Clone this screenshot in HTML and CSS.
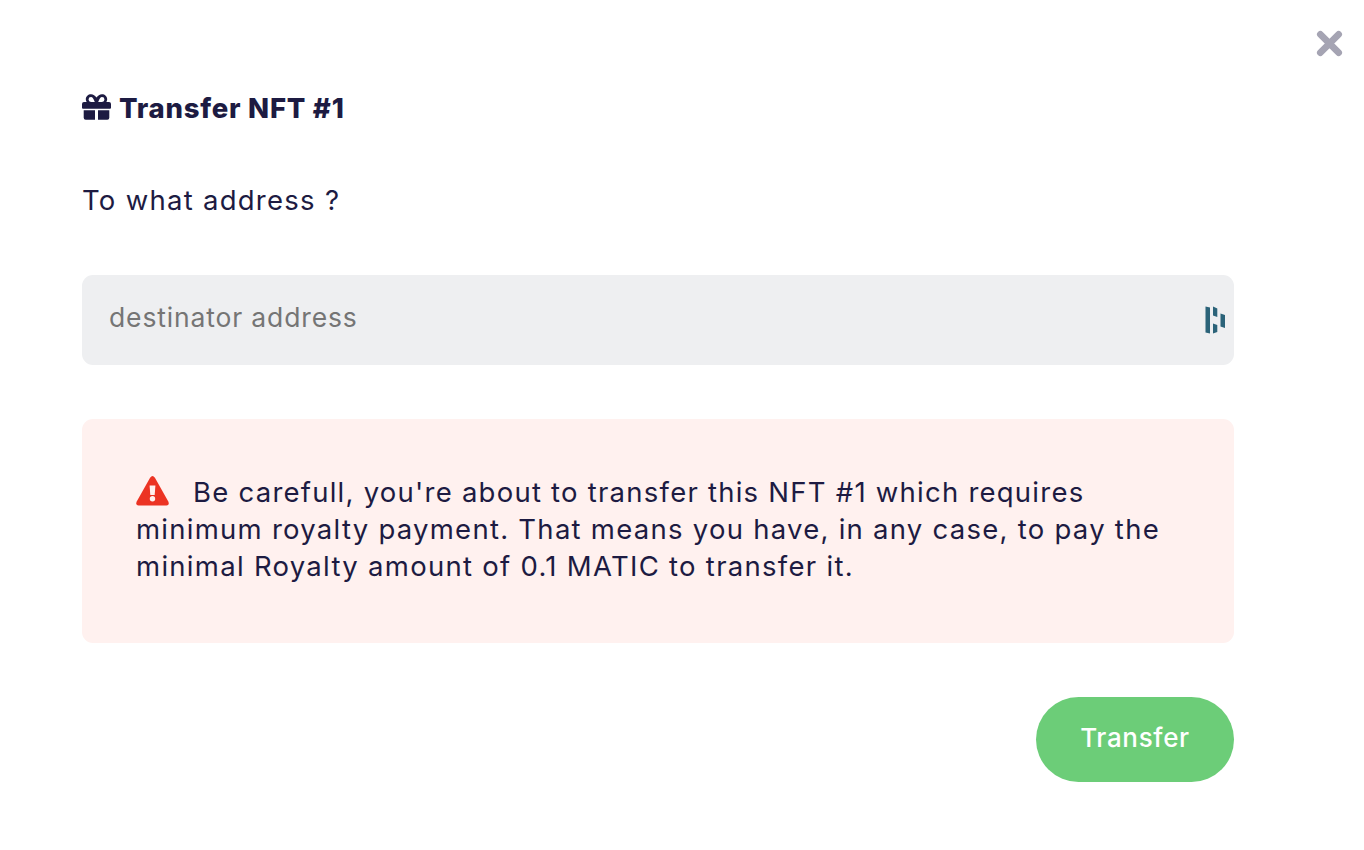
FILE: index.html
```html
<!DOCTYPE html>
<html lang="en">
<head>
<meta charset="utf-8">
<title>Transfer NFT</title>
<link rel="stylesheet" href="styles.css">
</head>
<body>
<main class="modal">
  <button class="close" aria-label="Close">
    <svg viewBox="0 0 26 26"><path d="M4.200 4.200L21.800 21.800M21.800 4.200L4.200 21.800"/></svg>
  </button>
  <h1 class="title">
    <svg class="gift" viewBox="0 0 29 26"><path fill-rule="evenodd" d="M2 8H4.600C4.100 7 3.800 6.200 3.800 5.300C3.800 2.300 6.200 .2 9 .2C11.400 .2 13 1.500 14.500 3.600C16 1.500 17.600 .2 20 .2C22.800 .2 25.200 2.300 25.200 5.300C25.200 6.200 24.900 7 24.400 8H27Q29 8 29 10V13.700Q29 14.700 28 14.700H1Q0 14.700 0 13.700V10Q0 8 2 8ZM9 3.100A2.300 2.300 0 0 0 9 8H12.800C11.400 4.900 10.600 3.100 9 3.100ZM20 3.100C18.400 3.100 17.600 4.900 16.200 8H20A2.300 2.300 0 0 0 20 3.100ZM1.700 16.300H13V25.800H3.700Q1.700 25.800 1.700 23.800ZM16 16.300H27.300V23.800Q27.300 25.800 25.300 25.800H16Z"/></svg>
    <span class="title-text">Transfer NFT #1</span>
  </h1>
  <label class="label" for="address">To what address ?</label>
  <div class="field">
    <input id="address" class="input" placeholder="destinator address">
    <svg class="manager" viewBox="0 0 20 28"><path d="M.5 .5L5 1.500V27.500L.5 26.500ZM8 .5L12.300 2.500V11L8 9.500ZM8 17.500L12.300 19V26L8 27.500ZM15.500 7.500L20 9V22L15.500 20.500Z"/></svg>
  </div>
  <p class="warning">
    <span class="line"><svg class="alert" viewBox="0 0 33 30"><path class="tri" d="M14.100 1.700Q16.500 -1.500 18.900 1.700L32.300 25.500Q33.700 29.300 30.500 29.500H2.500Q-.7 29.300 .7 25.500Z"/><path class="mark" d="M13.600 9.500H19.400L18.700 19H14.300Z"/><circle class="mark" cx="16.500" cy="22.700" r="2.700"/></svg><span class="line-one">Be carefull, you're about to transfer this NFT #1 which requires</span></span>
    <span class="line line-two">minimum royalty payment. That means you have, in any case, to pay the</span>
    <span class="line line-three">minimal Royalty amount of 0.1 MATIC to transfer it.</span>
  </p>
  <button class="submit">Transfer</button>
</main>
</body>
</html>
```
FILE: styles.css
```css
* { box-sizing: border-box; }
body { margin: 0; background: #fff; color: #1d1b42; font-family: Inter, "Liberation Sans", sans-serif; font-size: 27.5px; }
button { border: 0; font: inherit; cursor: pointer; }
svg { display: block; flex: none; }
.modal { position: relative; height: 850px; padding: 90px 130px 0 82px; display: flex; flex-direction: column; align-items: stretch; overflow: hidden; }
.close { position: absolute; top: 30px; right: 21px; width: 27px; height: 27px; padding: 0; background: none; }
.close svg { width: 27px; height: 27px; fill: none; stroke: #a5a4b3; stroke-width: 6.500; stroke-linecap: round; }
.title { display: flex; align-items: center; gap: 8px; height: 36px; margin: 0; font-size: 27.5px; font-weight: 800; letter-spacing: .75px; white-space: nowrap; }
.gift { width: 29px; height: 26px; margin-bottom: 2px; fill: #1d1b42; }
.label { height: 36px; margin-top: 56px; line-height: 36px; letter-spacing: 1.27px; white-space: nowrap; }
.field { display: flex; align-items: center; height: 90px; margin-top: 57px; padding: 0 9px 0 27px; border-radius: 11px; background: #eeeff1; }
.input { flex: 1; height: 50px; padding: 0 0 6px; border: 0; outline: 0; background: none; color: #1d1b42; font: inherit; font-size: 26.5px; letter-spacing: .85px; }
.input::placeholder { color: #757575; opacity: 1; }
.manager { width: 20px; height: 28px; margin-bottom: 1px; fill: #2b6379; }
.warning { height: 224px; margin: 54px 0 0; padding: 54px 54px 0; border-radius: 11px; background: #fff1ef; }
.line { display: flex; align-items: center; height: 37px; white-space: nowrap; }
.line-one { letter-spacing: 1.24px; }
.line-two { letter-spacing: 1.26px; }
.line-three { letter-spacing: 1.29px; }
.alert { width: 33px; height: 30px; margin-right: 24px; margin-bottom: 1px; }
.tri { fill: #ec3323; }
.mark { fill: #fff1ef; }
.submit { align-self: flex-end; width: 198px; height: 85px; margin-top: 54px; padding: 0 0 4px; border-radius: 43px; background: #6ccd78; color: #fff; font-size: 26px; font-weight: 500; letter-spacing: .65px; }
```
